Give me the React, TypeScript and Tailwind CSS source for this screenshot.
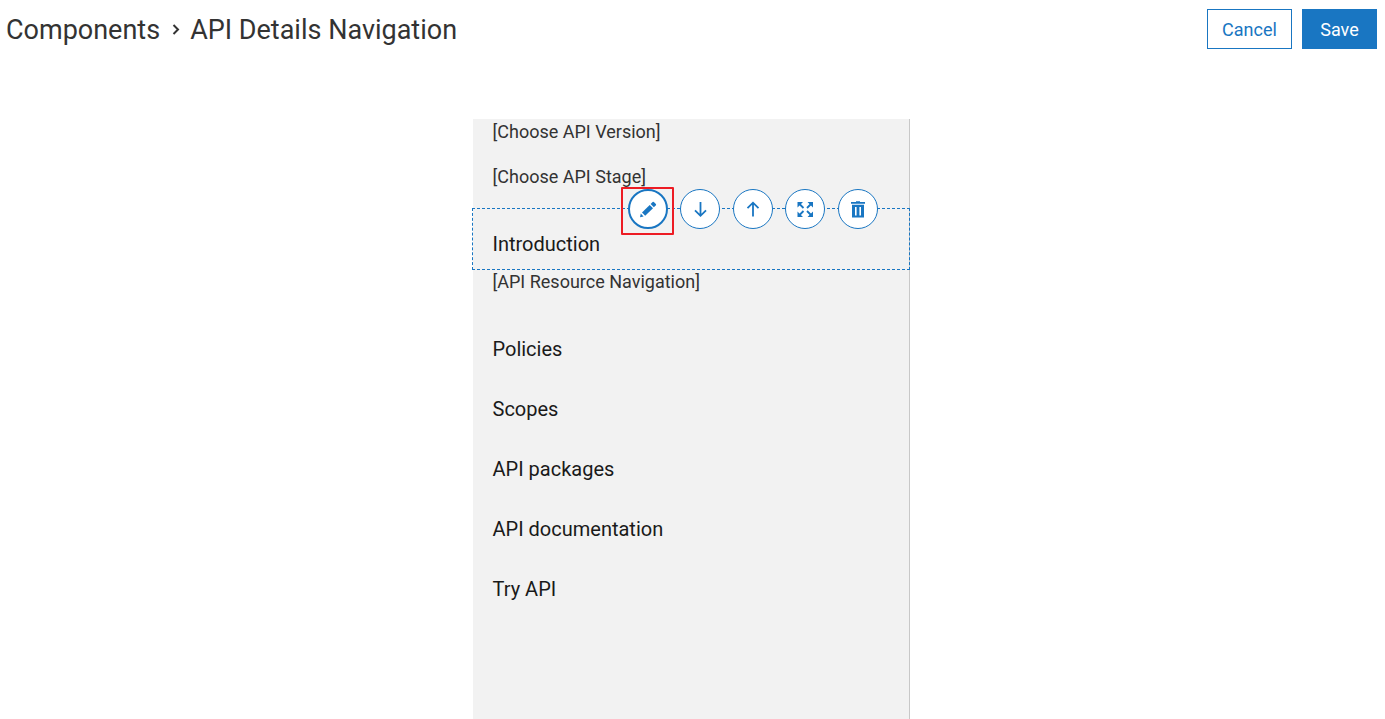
import type { ReactNode } from 'react';

const toolIcon = 'size-5';

function PencilIcon() {
  return (
    <svg viewBox="0 0 20 20" className={toolIcon} fill="currentColor" aria-hidden="true">
      <path d="M2 18.3 2.8 14.6 5.6 17.4Z" />
      <path d="M4 13.4 11.7 5.9 15 9.2 7.2 16.7Z" />
      <path d="M12.6 4.9 14.6 3Q15.2 2.5 15.8 3L17.9 5.1Q18.4 5.7 17.8 6.3L15.9 8.2Z" />
    </svg>
  );
}

function DownIcon() {
  return (
    <svg viewBox="0 0 20 20" className={toolIcon} fill="none" stroke="currentColor" strokeWidth="1.8" aria-hidden="true">
      <path d="M10.5 3V16.5M5 11.3 10.5 16.8 16 11.3" />
    </svg>
  );
}

function UpIcon() {
  return (
    <svg viewBox="0 0 20 20" className={toolIcon} fill="none" stroke="currentColor" strokeWidth="1.8" aria-hidden="true">
      <path d="M10 17.5V4M4.5 9.2 10 3.7 15.5 9.2" />
    </svg>
  );
}

function ExpandIcon() {
  return (
    <svg viewBox="0 0 20 20" className={toolIcon} aria-hidden="true">
      <path
        fill="currentColor"
        d="M2.5 3H8L2.5 8.5ZM18 3H12.5L18 8.5ZM2.5 18H8L2.5 12.5ZM18 18H12.5L18 12.5Z"
      />
      <path
        fill="none"
        stroke="currentColor"
        strokeWidth="1.8"
        d="M4 4.5 8.5 9M16.5 4.5 12 9M4 16.5 8.5 12M16.5 16.5 12 12"
      />
    </svg>
  );
}

function TrashIcon() {
  return (
    <svg viewBox="0 0 20 20" className={toolIcon} fill="currentColor" aria-hidden="true">
      <path d="M3 3H8V2.2H12V3H17V4.8H3Z" />
      <path fillRule="evenodd" d="M4 5.8H16V18.5H4ZM7 8V16.5H8.6V8ZM11.4 8V16.5H13V8Z" />
    </svg>
  );
}

function ToolButton({ label, active = false, children }: { label: string; active?: boolean; children: ReactNode }) {
  return (
    <button
      type="button"
      aria-label={label}
      className={
        active
          ? 'flex size-10 items-center justify-center rounded-full border-2 border-[#1976c2] bg-white'
          : 'flex size-10 items-center justify-center rounded-full border border-[#1976c2] bg-white'
      }
    >
      {children}
    </button>
  );
}

function Placeholder({ children }: { children: ReactNode }) {
  return <p className="mb-5 pl-5 text-lg/[25px]">{children}</p>;
}

function NavLink({ children }: { children: ReactNode }) {
  return (
    <a href="#" className="block pt-5 pb-2.5 pl-5 text-xl/[30px] text-[#1a1a1a]">
      {children}
    </a>
  );
}

export default function App() {
  return (
    <div className="flex min-h-screen flex-col bg-white font-['Roboto',sans-serif] text-[#333]">
      <header className="flex items-start justify-between pt-[9px] pr-2 pb-[7px] pl-1.5">
        <h1 className="flex items-center text-[27px]/[42px]">
          <span>Components</span>
          <svg viewBox="0 0 30 20" className="h-5 w-[30px]" fill="none" stroke="currentColor" strokeWidth="2" aria-hidden="true">
            <path d="M13.5 5 18 9.5 13.5 14" />
          </svg>
          <span>API Details Navigation</span>
        </h1>
        <div className="flex gap-2.5 text-lg">
          <button type="button" className="h-10 w-[85px] border border-[#1976c2] pt-0.5 text-[#1976c2]">
            Cancel
          </button>
          <button type="button" className="h-10 w-[75px] border border-[#1976c2] bg-[#1976c2] pt-0.5 text-white">
            Save
          </button>
        </div>
      </header>
      <main className="flex flex-1 justify-center pt-[61px] pr-[3px]">
        <nav aria-label="API details" className="w-[437px] border-r border-[#c8c8c8] bg-[#f2f2f2]">
          <Placeholder>[Choose API Version]</Placeholder>
          <Placeholder>[Choose API Stage]</Placeholder>
          <div className="relative -m-px border border-dashed border-[#1976c2]">
            <NavLink>Introduction</NavLink>
            <div className="absolute -top-5 right-[31px] flex w-[250px] justify-between text-[#1976c2]">
              <ToolButton label="Edit" active>
                <PencilIcon />
              </ToolButton>
              <ToolButton label="Move down">
                <DownIcon />
              </ToolButton>
              <ToolButton label="Move up">
                <UpIcon />
              </ToolButton>
              <ToolButton label="Resize">
                <ExpandIcon />
              </ToolButton>
              <ToolButton label="Delete">
                <TrashIcon />
              </ToolButton>
              <span className="pointer-events-none absolute -top-0.5 -left-[7px] h-12 w-[53px] rounded-[1px] border-2 border-[#ed1c24]" />
            </div>
          </div>
          <Placeholder>[API Resource Navigation]</Placeholder>
          <NavLink>Policies</NavLink>
          <NavLink>Scopes</NavLink>
          <NavLink>API packages</NavLink>
          <NavLink>API documentation</NavLink>
          <NavLink>Try API</NavLink>
        </nav>
      </main>
    </div>
  );
}
